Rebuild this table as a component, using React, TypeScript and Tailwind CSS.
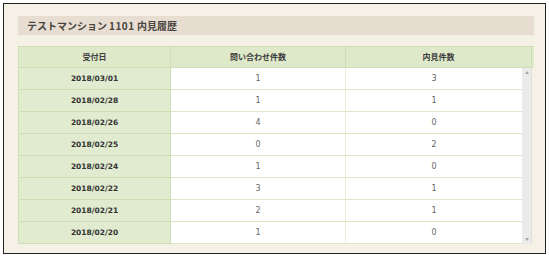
import React from "react";

const rows = [
  { date: "2018/03/01", inquiries: 1, viewings: 3 },
  { date: "2018/02/28", inquiries: 1, viewings: 1 },
  { date: "2018/02/26", inquiries: 4, viewings: 0 },
  { date: "2018/02/25", inquiries: 0, viewings: 2 },
  { date: "2018/02/24", inquiries: 1, viewings: 0 },
  { date: "2018/02/22", inquiries: 3, viewings: 1 },
  { date: "2018/02/21", inquiries: 2, viewings: 1 },
  { date: "2018/02/20", inquiries: 1, viewings: 0 },
];

const jp = { fontFamily: '"Noto Sans CJK JP", "DejaVu Sans", sans-serif' };
const num = { fontFamily: '"DejaVu Sans", Verdana, sans-serif' };

const App = () => {
  return (
    <div className="w-[549px] h-[257px] bg-white p-[3px]">
      <div className="h-[251px] border border-[#222] bg-[#f5f1e6] pl-[14px] pr-[11px] pt-[12px]">
        {/* title */}
        <div
          className="h-[19px] bg-[#e7ded1] pl-[9px] flex items-center text-[10px] font-bold text-[#4a4440]"
          style={jp}
        >
          テストマンション<span className="ml-[2px] tracking-[0.5px]">1101</span>&nbsp;内見履歴
        </div>

        {/* table */}
        <div className="mt-[11px] border-l border-t border-[#cddfb3]">
          <div
            className="grid grid-cols-[152px_175px_186px] h-[21px] bg-[#dde9c9] text-[8px] font-bold text-[#3d3d3d]"
            style={jp}
          >
            <div className="flex items-center justify-center border-r border-b border-[#cddfb3]">受付日</div>
            <div className="flex items-center justify-center border-r border-b border-[#cddfb3]">問い合わせ件数</div>
            <div className="flex items-center justify-center border-r border-b border-[#cddfb3]">内見件数</div>
          </div>
          <div className="flex">
            <div className="flex-none w-[503px]">
              {rows.map((r) => (
                <div key={r.date} className="grid grid-cols-[152px_175px_176px] h-[22px]" style={num}>
                  <div className="flex items-center justify-center bg-[#e0ebd0] border-r border-b border-[#cddfb3] text-[7.5px] font-bold text-[#333]">
                    {r.date}
                  </div>
                  <div className="flex items-center justify-center bg-white border-r border-b border-r-[#e9eddb] border-b-[#dfe6c4] text-[8px] text-[#666]">
                    {r.inquiries}
                  </div>
                  <div className="flex items-center justify-center bg-white border-b border-[#dfe6c4] text-[8px] text-[#666]">
                    {r.viewings}
                  </div>
                </div>
              ))}
            </div>
            <div className="flex-none w-[10px] bg-[#ebebeb] border-r border-[#e0e0e0] flex flex-col justify-between items-center py-[3px]">
              <div className="w-0 h-0 border-l-[2.5px] border-r-[2.5px] border-b-[3px] border-l-transparent border-r-transparent border-b-[#a3a3a3]" />
              <div className="w-0 h-0 border-l-[2.5px] border-r-[2.5px] border-t-[3px] border-l-transparent border-r-transparent border-t-[#a3a3a3]" />
            </div>
          </div>
        </div>
      </div>
    </div>
  );
};

export default App;
